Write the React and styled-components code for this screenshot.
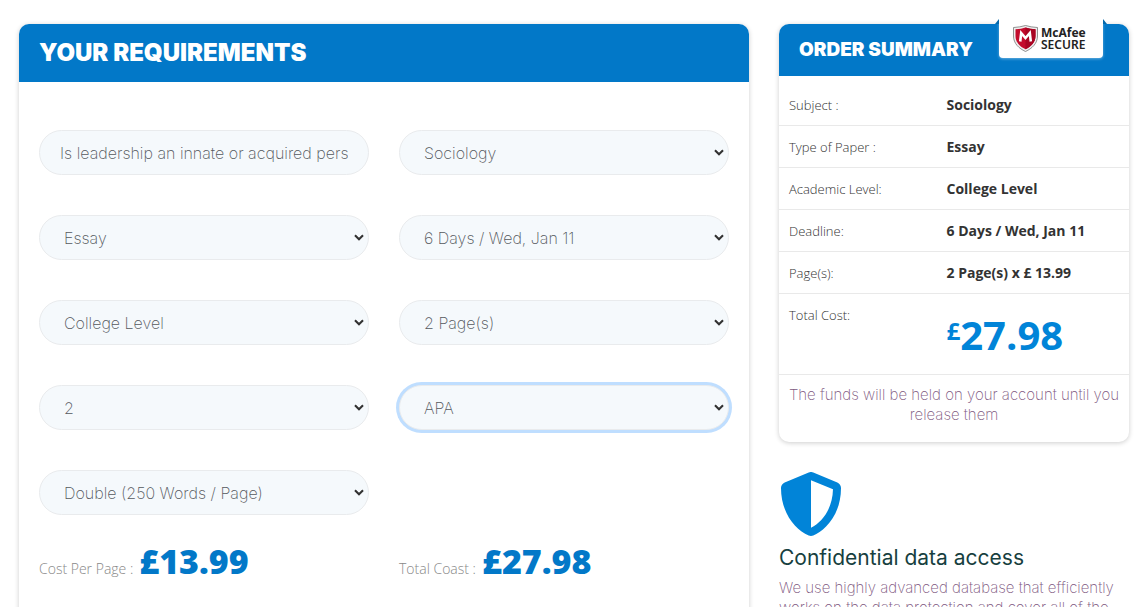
import styled, { createGlobalStyle, css } from "styled-components";
import { FaShieldAlt } from "react-icons/fa";

const GlobalStyle = createGlobalStyle`
    *{
        box-sizing : border-box;
    }
    body{
        margin : 0;
        background-color : #fff;
        color : #333;
        font-family : "Open Sans", "Noto Sans", sans-serif;
        font-size : 14px;
        line-height : 20px;
    }
`;

const Page = styled.main`
    display : grid;
    grid-template-columns : 73fr 35fr;
    align-items : start;
    gap : 30px;
    max-width : 1200px;
    margin : 0 auto;
    padding : 24px 17px 24px 19px;
`;

const Card = styled.section`
    position : relative;
    background-color : #fff;
    border-radius : 10px;
    box-shadow : 0 1px 5px rgba(0, 0, 0, 0.2);
`;

const CardHeader = styled.header`
    display : flex;
    align-items : center;
    height : ${props => props.$large ? "58px" : "52px"};
    padding : 0 20px;
    background-color : #0278c8;
    border-radius : 10px 10px 0 0;
`;

const CardTitle = styled.h2`
    margin : 0;
    color : #fff;
    font-family : Inter, sans-serif;
    font-size : ${props => props.$large ? "24px" : "19px"};
    font-weight : 900;
    line-height : 26px;
`;

const Form = styled.form`
    display : grid;
    grid-template-columns : 1fr 1fr;
    gap : 40px 30px;
    padding : 48px 20px 60px;
`;

const field = css`
    width : 100%;
    height : 45px;
    padding : 0 20px;
    border : 1px solid #e9ebed;
    border-radius : 23px;
    background-color : #f5f9fc;
    color : #54585c;
    font-family : Inter, sans-serif;
    font-size : 16px;
    font-weight : 200;
    outline : none;
`;

const TextField = styled.input`
    ${field}
`;

const SelectField = styled.select`
    ${field}
    appearance : none;
    padding : 0 24px;
    background-image : url("data:image/svg+xml,%3Csvg xmlns='http://www.w3.org/2000/svg' width='10' height='7' viewBox='0 0 10 7'%3E%3Cpath d='M1 1.2L5 5.2L9 1.2' fill='none' stroke='%23333' stroke-width='2.1'/%3E%3C/svg%3E");
    background-repeat : no-repeat;
    background-position : right 4px center;
    box-shadow : ${props => props.$active ? "0 0 0 3px #bfdeff" : "none"};
`;

const Costs = styled.div`
    grid-column : 1 / -1;
    display : grid;
    grid-template-columns : 1fr 1fr;
    gap : 30px;
    margin-top : -14px;
`;

const Cost = styled.div`
    display : flex;
    align-items : baseline;
    gap : 6px;
    color : #888;
    font-weight : 300;
    line-height : 40px;
`;

const CostValue = styled.strong`
    color : #0278c8;
    font-size : 34px;
    font-weight : 800;
`;

const Badge = styled.a`
    position : absolute;
    top : -5px;
    right : 26px;
    display : flex;
    align-items : center;
    gap : 3px;
    width : 104px;
    height : 39px;
    padding-left : 14px;
    border-radius : 0 0 4px 4px;
    background-color : #fff;
    box-shadow : 0 1px 3px rgba(255, 255, 255, 0.4);
    color : #222;
    font-family : "Noto Sans", sans-serif;
    font-size : 12px;
    line-height : 12px;
    text-decoration : none;
    &::before, &::after{
        content : "";
        position : absolute;
        top : 0;
        border-bottom : 5px solid #0368ab;
    }
    &::before{
        right : 100%;
        border-left : 4px solid transparent;
    }
    &::after{
        left : 100%;
        border-right : 4px solid transparent;
    }
`;

const BadgeText = styled.span`
    display : flex;
    flex-direction : column;
    font-weight : 600;
`;

const BadgeName = styled.span`
    font-weight : 700;
`;

const Summary = styled.table`
    width : 100%;
    margin-top : 8px;
    border-collapse : collapse;
    table-layout : fixed;
    tr{
        border-bottom : 1px solid #e9e9e9;
    }
    th, td{
        padding : 11px 10px 10px;
        text-align : left;
        vertical-align : top;
    }
    th{
        width : 45%;
        font-size : 13px;
        font-weight : 300;
    }
    td{
        font-weight : 700;
    }
`;

const Total = styled.div`
    display : flex;
    align-items : flex-start;
    color : #0184d8;
    font-size : 40px;
    line-height : 40px;
    padding : 10px 0 9px;
`;

const Currency = styled.span`
    font-size : 24px;
    line-height : 32px;
`;

const Note = styled.p`
    margin : 0;
    padding : 10px 4px 17px;
    color : #80597f;
    font-family : Inter, sans-serif;
    font-size : 15px;
    font-weight : 200;
    text-align : center;
`;

const Feature = styled.section`
    margin-top : 30px;
    > svg{
        display : block;
        color : #0184d8;
    }
`;

const FeatureTitle = styled.h3`
    margin : 8px 0 6px;
    color : #173f40;
    font-family : Inter, sans-serif;
    font-size : 21px;
    font-weight : 400;
    line-height : 28px;
`;

const FeatureText = styled.p`
    margin : 0;
    color : #80597f;
    font-family : Inter, sans-serif;
    font-size : 15px;
    font-weight : 200;
`;

const selects = [
    { label: "Subject", value: "Sociology" },
    { label: "Type of paper", value: "Essay" },
    { label: "Deadline", value: "6 Days / Wed, Jan 11" },
    { label: "Academic level", value: "College Level" },
    { label: "Pages", value: "2 Page(s)" },
    { label: "Sources", value: "2" },
    { label: "Citation style", value: "APA", active: true },
    { label: "Spacing", value: "Double (250 Words / Page)" },
];

const summary = [
    ["Subject :", "Sociology"],
    ["Type of Paper :", "Essay"],
    ["Academic Level:", "College Level"],
    ["Deadline:", "6 Days / Wed, Jan 11"],
    ["Page(s):", "2 Page(s) x £ 13.99"],
];

function McAfeeShield() {
    return (
        <svg width="25" height="27" viewBox="0 0 25 27" aria-hidden="true">
            <path d="M.5 2.5Q7 2.2 12.5 .5Q18 2.2 24.5 2.5V11C24.5 18.5 19 23.5 12.5 26.5C6 23.5 .5 18.5 .5 11Z" fill="#eee" stroke="#777" strokeWidth=".8" />
            <path d="M2.5 4.2Q8 4 12.5 2.4Q17 4 22.5 4.2V11C22.5 17.5 18 21.6 12.5 24.3C7 21.6 2.5 17.5 2.5 11Z" fill="#c30b2c" />
            <path d="M12.5 2.4Q17 4 22.5 4.2V11C22.5 17.5 18 21.6 12.5 24.3Z" fill="#a80523" />
            <path d="M7.2 16.5L8.2 8L12.5 13L16.8 8L17.8 16.5" fill="none" stroke="#fff" strokeWidth="2.6" />
        </svg>
    );
}

export default function App() {
    return (
        <>
        <GlobalStyle />
        <Page>
        <Card>
            <CardHeader $large>
                <CardTitle $large>YOUR REQUIREMENTS</CardTitle>
            </CardHeader>
            <Form>
                <TextField aria-label="Topic" defaultValue="Is leadership an innate or acquired personality trait" />
                {selects.map(item => (
                    <SelectField key={item.label} aria-label={item.label} $active={item.active}>
                        <option>{item.value}</option>
                    </SelectField>
                ))}
                <Costs>
                    <Cost>Cost Per Page : <CostValue>£13.99</CostValue></Cost>
                    <Cost>Total Coast : <CostValue>£27.98</CostValue></Cost>
                </Costs>
            </Form>
        </Card>
        <aside>
            <Card>
                <CardHeader>
                    <CardTitle>ORDER SUMMARY</CardTitle>
                </CardHeader>
                <Badge href="#secure">
                    <McAfeeShield />
                    <BadgeText>
                        <BadgeName>McAfee</BadgeName>
                        <span>SECURE</span>
                    </BadgeText>
                </Badge>
                <Summary>
                    <tbody>
                        {summary.map(([label, value]) => (
                            <tr key={label}>
                                <th scope="row">{label}</th>
                                <td>{value}</td>
                            </tr>
                        ))}
                        <tr>
                            <th scope="row">Total Cost:</th>
                            <td><Total><Currency>£</Currency>27.98</Total></td>
                        </tr>
                    </tbody>
                </Summary>
                <Note>The funds will be held on your account until you release them</Note>
            </Card>
            <Feature>
                <FaShieldAlt size={64} />
                <FeatureTitle>Confidential data access</FeatureTitle>
                <FeatureText>We use highly advanced database that efficiently works on the data protection and cover all of the</FeatureText>
            </Feature>
        </aside>
        </Page>
        </>
    );
}
